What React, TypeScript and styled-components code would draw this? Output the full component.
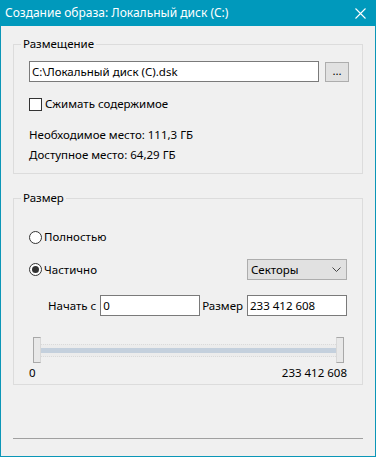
import React from 'react';
import styled, { createGlobalStyle } from 'styled-components';

const GlobalStyle = createGlobalStyle`
  html, body {
    margin: 0;
    padding: 0;
    background: #ffffff;
  }
  body {
    font-family: "Noto Sans", "Open Sans", sans-serif;
    font-size: 11.5px;
    color: #000;
  }
`;

function App() {
  return (
    <>
      <GlobalStyle />
      <Window>
        <TitleBar>
          <Title>Создание образа: Локальный диск (C:)</Title>
          <CloseButton>
            <svg width="11" height="11" viewBox="0 0 11 11">
              <path d="M0.5 0.5 L10.5 10.5 M10.5 0.5 L0.5 10.5" stroke="#fff" strokeWidth="1.1" />
            </svg>
          </CloseButton>
        </TitleBar>
        <Body>
          <Group>
            <Legend>Размещение</Legend>
            <PathRow>
              <TextInput width={291} defaultValue="C:\Локальный диск (C).dsk" />
              <BrowseButton>...</BrowseButton>
            </PathRow>
            <CheckRow>
              <CheckBox />
              <span>Сжимать содержимое</span>
            </CheckRow>
            <InfoLine $gap={15}>Необходимое место: 111,3 ГБ</InfoLine>
            <InfoLine $gap={4}>Доступное место: 64,29 ГБ</InfoLine>
          </Group>

          <Group $top={16} $padRight={15} $padBottom={3}>
            <Legend>Размер</Legend>
            <RadioRow $top={23}>
              <Radio />
              <span>Полностью</span>
            </RadioRow>
            <OptionRow>
              <RadioRow>
                <Radio $checked />
                <span>Частично</span>
              </RadioRow>
              <Select>
                <span>Секторы</span>
                <svg width="9" height="5" viewBox="0 0 9 5">
                  <path d="M0.5 0.5 L4.5 4.5 L8.5 0.5" stroke="#444" fill="none" strokeWidth="1" />
                </svg>
              </Select>
            </OptionRow>
            <RangeRow>
              <FieldPair>
                <FieldLabel>Начать с</FieldLabel>
                <TextInput width={100} defaultValue="0" />
              </FieldPair>
              <FieldPair>
                <FieldLabel>Размер</FieldLabel>
                <TextInput width={100} defaultValue="233 412 608" />
              </FieldPair>
            </RangeRow>
            <Slider>
              <Thumb $side="left" />
              <Track>
                <Fill />
              </Track>
              <Thumb $side="right" />
            </Slider>
            <SliderLabels>
              <span>0</span>
              <span>233 412 608</span>
            </SliderLabels>
          </Group>

          <Separator />
        </Body>
      </Window>
    </>
  );
}

export default App;

const Window = styled.div`
  width: 376px;
  height: 457px;
  box-sizing: border-box;
  border: 1px solid #0b96b7;
  border-top: none;
  background: #f0f0f0;
  display: flex;
  flex-direction: column;
`;

const TitleBar = styled.div`
  height: 26px;
  margin: 0 -1px;
  background: #0099bc;
  display: flex;
  align-items: center;
  justify-content: space-between;
  padding: 0 10px 0 5px;
  flex-shrink: 0;
`;

const Title = styled.span`
  color: #fff;
  font-size: 12px;
  line-height: 16px;
`;

const CloseButton = styled.span`
  display: flex;
  align-items: center;
  justify-content: center;
  width: 11px;
  height: 11px;
`;

const Body = styled.div`
  display: flex;
  flex-direction: column;
  padding: 0 12px;
`;

const Group = styled.fieldset<{ $top?: number; $padRight?: number; $padBottom?: number }>`
  margin: ${(p) => p.$top ?? 10}px 0 0 0;
  padding: 0 ${(p) => p.$padRight ?? 13}px ${(p) => p.$padBottom ?? 10}px 15px;
  border: 1px solid #dcdcdc;
  display: flex;
  flex-direction: column;
  min-width: 0;
`;

const Legend = styled.legend`
  padding: 0 2px;
  margin-left: -8px;
  line-height: 16px;
`;

const PathRow = styled.div`
  display: flex;
  align-items: center;
  gap: 6px;
  margin-top: 9px;
`;

const TextInput = styled.input<{ width: number }>`
  width: ${(p) => p.width}px;
  height: 21px;
  box-sizing: border-box;
  border: 1px solid #7a7a7a;
  background: #fff;
  padding: 0 2px;
  font: inherit;
  color: #000;
  outline: none;
`;

const BrowseButton = styled.button`
  width: 24px;
  height: 20px;
  box-sizing: border-box;
  border: 1px solid #adadad;
  background: #e1e1e1;
  padding: 0;
  font: inherit;
  line-height: 12px;
  color: #000;
  display: flex;
  align-items: flex-end;
  justify-content: center;
  padding-bottom: 4px;
`;

const CheckRow = styled.label`
  display: flex;
  align-items: center;
  gap: 3px;
  line-height: 16px;
  margin-top: 14px;
`;

const CheckBox = styled.span`
  width: 13px;
  height: 13px;
  box-sizing: border-box;
  border: 1px solid #333;
  background: #fff;
`;

const InfoLine = styled.div<{ $gap?: number }>`
  line-height: 16px;
  margin-top: ${(p) => p.$gap ?? 16}px;
`;

const RadioRow = styled.label<{ $top?: number }>`
  display: flex;
  align-items: center;
  gap: 2px;
  line-height: 16px;
  margin-top: ${(p) => p.$top ?? 0}px;
`;

const Radio = styled.span<{ $checked?: boolean }>`
  width: 13px;
  height: 13px;
  box-sizing: border-box;
  border: 1px solid #333;
  border-radius: 50%;
  background: #fff;
  display: flex;
  align-items: center;
  justify-content: center;

  &::after {
    content: '';
    display: ${(p) => (p.$checked ? 'block' : 'none')};
    width: 7px;
    height: 7px;
    border-radius: 50%;
    background: #333;
  }
`;

const OptionRow = styled.div`
  display: flex;
  align-items: center;
  justify-content: space-between;
  margin-top: 14px;
  height: 21px;
`;

const Select = styled.div`
  width: 100px;
  height: 21px;
  box-sizing: border-box;
  border: 1px solid #adadad;
  background: #e1e1e1;
  display: flex;
  align-items: center;
  justify-content: space-between;
  padding: 0 5px 0 3px;
`;

const RangeRow = styled.div`
  display: flex;
  align-items: center;
  justify-content: space-between;
  padding-left: 19px;
  margin-top: 15px;
`;

const FieldPair = styled.div`
  display: flex;
  align-items: center;
  gap: 4px;
  white-space: nowrap;
`;

const FieldLabel = styled.span`
  line-height: 16px;
`;

const Slider = styled.div`
  display: flex;
  align-items: center;
  height: 26px;
  margin: 21px 3px 0 4px;
`;

const Thumb = styled.div<{ $side: 'left' | 'right' }>`
  width: 8px;
  height: 26px;
  box-sizing: border-box;
  background: #e8e8e8;
  border: 1px solid #a8a8a8;
  ${(p) => (p.$side === 'left' ? 'border-right-color: #d8d8d8;' : 'border-left-color: #d8d8d8;')}
  flex-shrink: 0;
`;

const Track = styled.div`
  flex: 1;
  height: 13px;
  box-sizing: border-box;
  background: #ececec;
  border-top: 1px dotted #dadada;
  border-bottom: 1px dotted #dadada;
  display: flex;
  align-items: center;
`;

const Fill = styled.div`
  width: 100%;
  height: 5px;
  background: #c4d0dd;
`;

const SliderLabels = styled.div`
  display: flex;
  justify-content: space-between;
  line-height: 16px;
  margin-top: 2px;
`;

const Separator = styled.div`
  height: 1px;
  background: #a0a0a0;
  margin-top: 53px;
`;
